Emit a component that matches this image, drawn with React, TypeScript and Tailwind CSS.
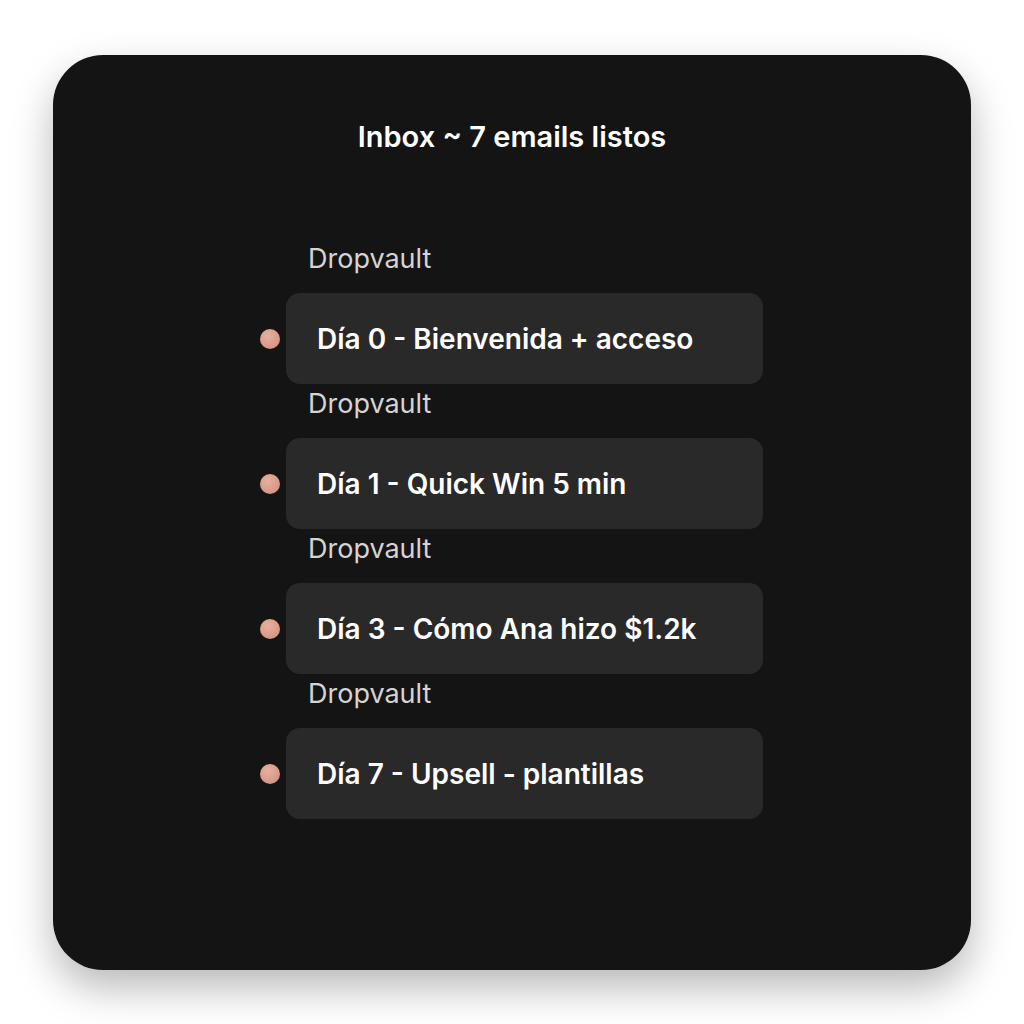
import React from "react";

type EmailRowProps = {
  sender: string;
  subject: string;
};

function EmailRow({ sender, subject }: EmailRowProps) {
  return (
    <div className="flex flex-col">
      <p className="h-[30px] pl-[22px] text-[27px] leading-[30px] text-[#d4d4d4]">{sender}</p>
      <div className="relative mt-[19px] flex h-[91px] items-center rounded-[14px] bg-[#292929] pl-[31px]">
        <span className="absolute -left-[26px] top-1/2 h-[20px] w-[20px] -translate-y-1/2 rounded-full bg-[radial-gradient(circle_at_40%_35%,#e8b0a0,#cf8b78)]" />
        <span className="text-[28px] font-semibold leading-none text-white">{subject}</span>
      </div>
    </div>
  );
}

const emails = [
  "Día 0 - Bienvenida + acceso",
  "Día 1 - Quick Win 5 min",
  "Día 3 - Cómo Ana hizo $1.2k",
  "Día 7 - Upsell - plantillas",
];

export default function App() {
  return (
    <div
      className="flex h-[1024px] w-[1024px] items-start justify-center bg-white pt-[55px]"
      style={{ fontFamily: "Inter, 'Noto Sans', sans-serif" }}
    >
      <div className="flex h-[915px] w-[918px] flex-col items-center rounded-[50px] bg-[#141414] shadow-[0_18px_40px_rgba(0,0,0,0.28)]">
        <h1 className="mt-[64px] text-[29px] font-semibold leading-[36px] text-white">
          Inbox ~ 7 emails listos
        </h1>
        <div className="mt-[89px] ml-[25px] flex w-[477px] flex-col gap-[5px]">
          {emails.map((subject) => (
            <EmailRow key={subject} sender="Dropvault" subject={subject} />
          ))}
        </div>
      </div>
    </div>
  );
}
